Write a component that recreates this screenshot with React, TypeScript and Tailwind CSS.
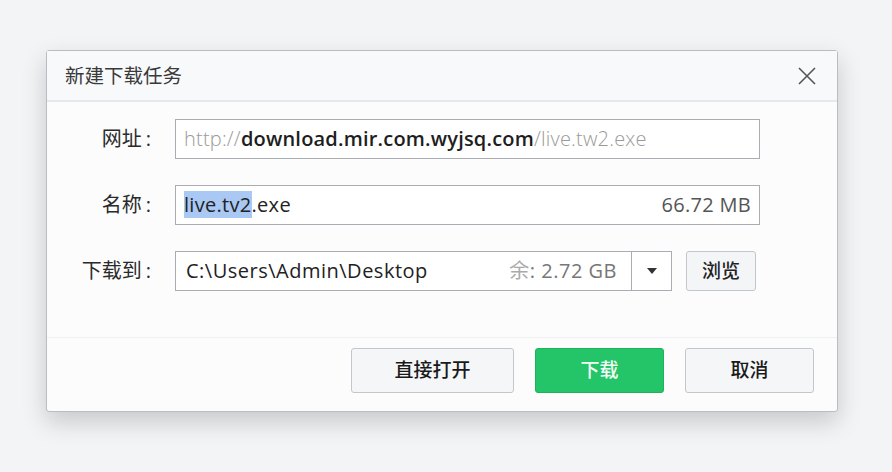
import React from 'react';

const font = { fontFamily: '"Open Sans", "Noto Sans CJK SC", sans-serif' };

export default function App() {
  return (
    <div className="w-[892px] h-[472px] bg-[#f3f4f6] pl-[46px] pt-[50px]" style={font}>
      {/* Dialog */}
      <div className="w-[792px] h-[362px] bg-[#fcfcfd] border border-[#b9bcc2] rounded-[3px] shadow-[0_10px_24px_rgba(0,0,0,0.18)] flex flex-col">
        {/* Header */}
        <div className="h-[51px] flex items-center justify-between pl-[18px] pr-[20px] border-b-2 border-[#e6e8eb] bg-[#f8f9fa]">
          <span className="text-[19.5px] text-[#3a3a3a]">新建下载任务</span>
          <svg width="20" height="20" viewBox="0 0 20 20" className="text-[#555]">
            <path d="M2 2 L18 18 M18 2 L2 18" stroke="currentColor" strokeWidth="1.6" fill="none" />
          </svg>
        </div>

        {/* Body */}
        <div className="flex-1 flex flex-col gap-[26px] pt-[17px]">
          <div className="flex items-center">
            <div className="w-[106px] pr-[2px] text-right text-[20px] text-[#2a2a2a]">网址<span className="ml-[4px]">:</span></div>
            <div className="ml-[22px] w-[585px] h-[40px] border border-[#a9acb2] bg-white flex items-center px-[8px] text-[20px] tracking-[0.2px] whitespace-nowrap overflow-hidden">
              <span className="text-[#9a9a9a] font-light">http://</span>
              <span className="text-[#1e1e1e] font-semibold">download.mir.com.wyjsq.com</span>
              <span className="text-[#9a9a9a] font-light">/live.tw2.exe</span>
            </div>
          </div>

          <div className="flex items-center">
            <div className="w-[106px] pr-[2px] text-right text-[20px] text-[#2a2a2a]">名称<span className="ml-[4px]">:</span></div>
            <div className="ml-[22px] w-[585px] h-[40px] border border-[#a9acb2] bg-white flex items-center justify-between px-[8px] text-[20px] tracking-[0.3px]">
              <span className="text-[#222]">
                <span className="bg-[#a9c8f4]">live.tv2</span>.exe
              </span>
              <span className="text-[#555]">66.72 MB</span>
            </div>
          </div>

          <div className="flex items-center">
            <div className="w-[106px] pr-[2px] text-right text-[20px] text-[#2a2a2a]">下载到<span className="ml-[4px]">:</span></div>
            <div className="ml-[22px] w-[457px] h-[40px] border border-[#a9acb2] bg-white flex items-center justify-between pl-[10px] pr-[14px] text-[20px] tracking-[0.5px]">
              <span className="text-[#222]">C:\Users\Admin\Desktop</span>
              <span className="text-[#777]">
                <span className="text-[#aaa]">余</span>: 2.72 GB
              </span>
            </div>
            <div className="w-[40px] h-[40px] border border-l-0 border-[#a9acb2] bg-white flex items-center justify-center">
              <svg width="10" height="6" viewBox="0 0 10 6">
                <path d="M0 0 L10 0 L5 6 Z" fill="#333" />
              </svg>
            </div>
            <div className="ml-[14px] w-[70px] h-[40px] border border-[#c3c6cb] rounded-[3px] bg-[#f4f5f7] flex items-center justify-center text-[19px] font-medium text-[#222]">
              浏览
            </div>
          </div>
        </div>

        {/* Footer */}
        <div className="h-[74px] border-t border-[#eef0f2] flex justify-end gap-[21px] pr-[23px] pt-[10px]">
          <div className="w-[163px] h-[45px] border border-[#c3c6cb] rounded-[3px] bg-[#f5f6f8] flex items-center justify-center text-[19px] font-medium text-[#1a1a1a]">
            直接打开
          </div>
          <div className="w-[129px] h-[45px] rounded-[3px] bg-[#24c468] border border-[#1fb25d] flex items-center justify-center text-[19px] font-medium text-[#f2fff6]">
            下载
          </div>
          <div className="w-[129px] h-[45px] border border-[#c3c6cb] rounded-[3px] bg-[#f5f6f8] flex items-center justify-center text-[19px] font-medium text-[#1a1a1a]">
            取消
          </div>
        </div>
      </div>
    </div>
  );
}
